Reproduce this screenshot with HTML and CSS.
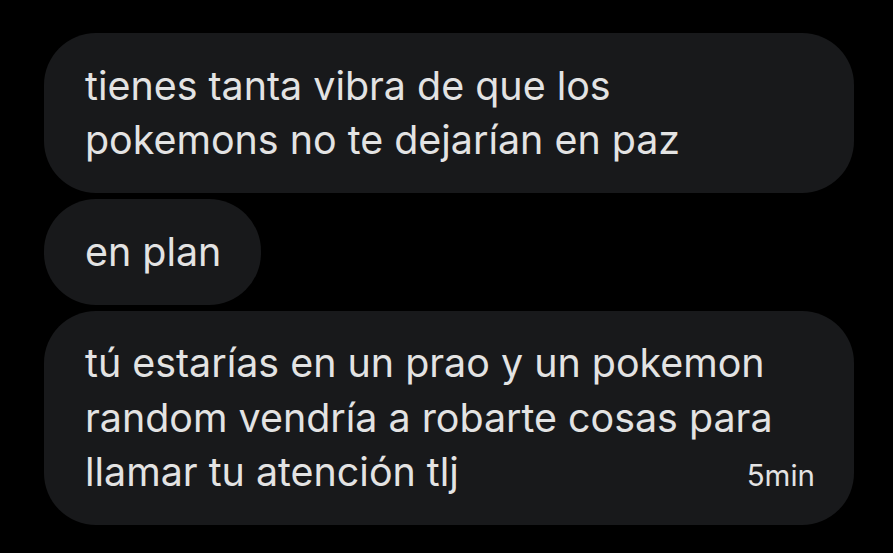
FILE: index.html
```html
<!DOCTYPE html>
<html lang="es">
<head>
<meta charset="utf-8">
<link rel="stylesheet" href="styles.css">
</head>
<body>
<div class="thread">
  <div class="bubble wide">
    <p class="text">tienes tanta vibra de que los pokemons no te dejarían en paz</p>
  </div>
  <div class="bubble">
    <p class="text">en plan</p>
  </div>
  <div class="bubble wide last">
    <p class="text">tú estarías en un prao y un pokemon random vendría a robarte cosas para llamar tu atención tlj<span class="time">5min</span></p>
  </div>
</div>
</body>
</html>
```
FILE: styles.css
```css
html, body {
  margin: 0;
  padding: 0;
  background: #000;
}
body {
  width: 893px;
  height: 553px;
  overflow: hidden;
  font-family: "Inter", "Roboto", sans-serif;
  color: #e3e3e3;
}
.thread {
  display: flex;
  flex-direction: column;
  align-items: flex-start;
  gap: 6px;
  padding: 33px 39px 0 44px;
}
.bubble {
  background: #18191b;
  border-radius: 52px;
  padding: 25.5px 40px 25.5px 41px;
  box-sizing: border-box;
}
.bubble.wide {
  align-self: stretch;
}
.text {
  margin: 0;
  font-size: 39.4px;
  line-height: 54.5px;
  max-width: 710px;
}
.last .text {
  max-width: none;
  padding-right: 20px;
}
.last .text::before {
  content: "";
  float: right;
  width: 0;
  height: 109px;
}
.time {
  float: right;
  clear: right;
  margin-right: -21px;
  font-size: 29.5px;
  line-height: 49px;
  padding-top: 5.5px;
  white-space: nowrap;
}
```
